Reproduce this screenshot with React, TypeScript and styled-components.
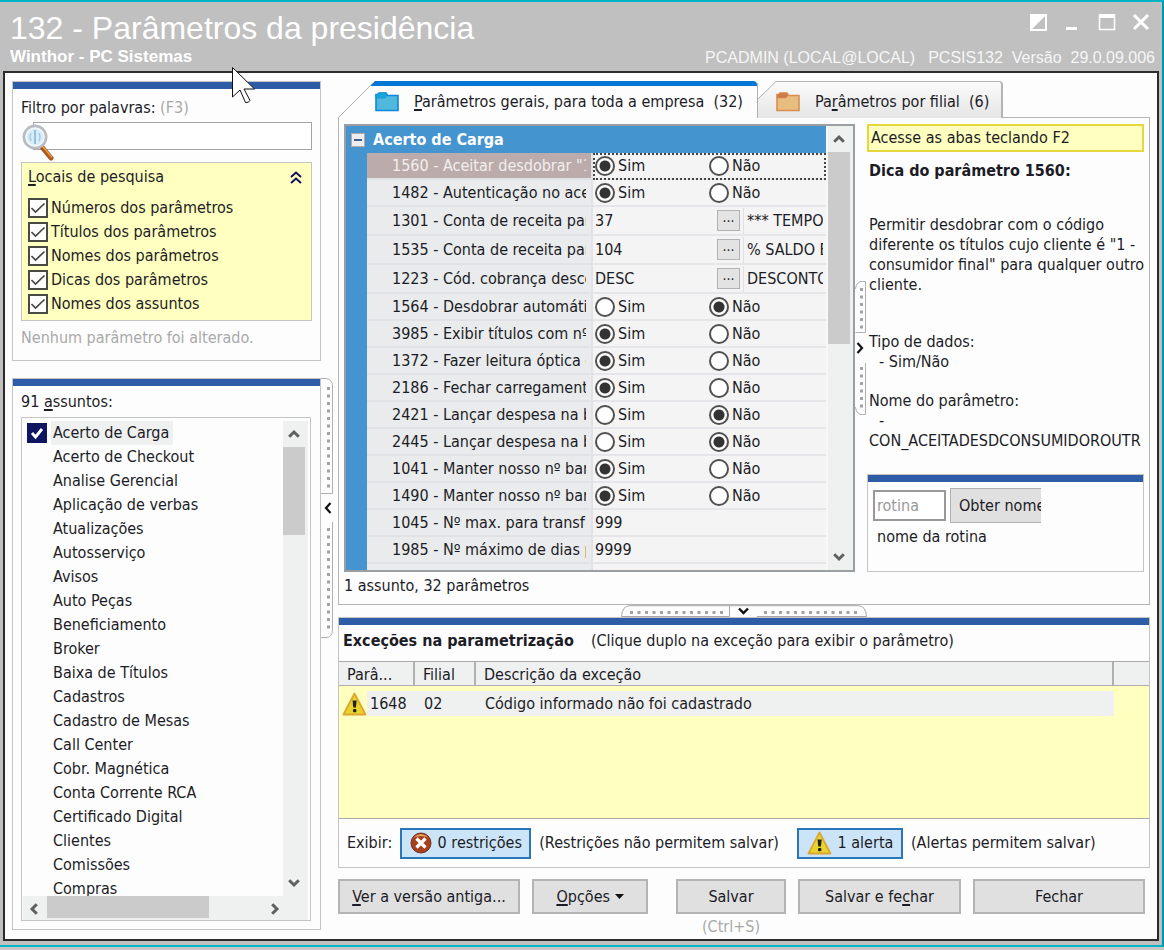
import React from 'react';
import styled, { createGlobalStyle, css } from 'styled-components';

const GlobalStyle = createGlobalStyle`
  * { box-sizing: border-box; }
  html, body, #root { height: 100%; }
  body {
    margin: 0;
    background: #c6c6c6;
    color: #1c1c26;
    font: 16px/20px "DejaVu Sans Condensed", "Noto Sans", sans-serif;
  }
  button, input { font: inherit; color: inherit; }
  button { padding: 0; }
  u { text-underline-offset: 2px; text-decoration-thickness: 2px; }
`;

const blueBar = '#2f5ca6';
const line = '#c4c4c4';
const pale = '#ffffbf';

/* ---------- window ---------- */

const Shell = styled.div`
  height: 100%;
  min-height: 760px;
  display: flex;
  flex-direction: column;
  padding-bottom: 3px;
`;

const Frame = styled.div`
  flex: 1;
  min-height: 0;
  display: flex;
  flex-direction: column;
  background: #c0c0c0;
  padding: 0 3px 4px;
  border: solid #00b4c8;
  border-width: 2px 0 2px 0;
  border-right: 2px solid #0096ac;
`;

const TitleBar = styled.header`
  position: relative;
  height: 69px;
  flex: none;
  display: flex;
  justify-content: space-between;
  padding: 8px 4px 0 7px;
  color: #fff;
  font-family: "Liberation Sans", Arial, sans-serif;
`;

const Titles = styled.div`
  display: flex;
  flex-direction: column;
`;

const Title = styled.h1`
  margin: 0;
  font-size: 32px;
  line-height: 36px;
  font-weight: 400;
  white-space: nowrap;
`;

const Subtitle = styled.div`
  font-weight: 700;
  font-size: 17px;
  line-height: 22px;
`;

const TitleSide = styled.div`
  display: flex;
  flex-direction: column;
  justify-content: space-between;
  align-items: flex-end;
  padding-bottom: 2px;
`;

const Session = styled.div`
  display: flex;
  gap: 13px;
  font-size: 16px;
  line-height: 22px;
  white-space: nowrap;
  color: #f6f6f6;
`;

const WindowButtons = styled.div`
  display: flex;
  gap: 14px;
  padding: 2px 4px 0 0;
`;

const WindowButton = styled.button`
  width: 20px;
  height: 20px;
  border: 0;
  background: none;
  svg { display: block; }
`;

const Pointer = styled.svg`
  position: absolute;
  left: 228px;
  top: 64px;
  z-index: 5;
`;

const Client = styled.main`
  flex: 1;
  min-height: 0;
  display: flex;
  gap: 5px;
  background: #fdfdfd;
  border: 2px solid #2b2b2b;
  padding: 8px 7px 0 7px;
`;

/* ---------- shared parts ---------- */

const Panel = styled.section`
  display: flex;
  flex-direction: column;
  border: 1px solid ${line};
  background: #fdfdfd;
  &::before {
    content: "";
    flex: none;
    height: 7px;
    background: ${blueBar};
  }
`;

const Muted = styled.span`
  color: #a9a9a9;
`;

const Button = styled.button<{ $w: number }>`
  width: ${(p) => p.$w}px;
  height: 35px;
  background: #e0e0e0;
  border: 2px solid #b4b4b4;
  white-space: nowrap;
`;

const ScrollTrack = styled.div<{ $horizontal?: boolean }>`
  flex: none;
  display: flex;
  flex-direction: ${(p) => (p.$horizontal ? 'row' : 'column')};
  justify-content: space-between;
  background: #eff0f0;
  ${(p) => (p.$horizontal ? 'height: 24px;' : 'width: 25px;')}
`;

const ScrollArrow = styled.button`
  display: flex;
  align-items: center;
  justify-content: center;
  width: 22px;
  height: 26px;
  border: 0;
  background: none;
`;

const ScrollThumb = styled.div<{ $horizontal?: boolean; $size: number }>`
  background: #cbcbcb;
  ${(p) =>
    p.$horizontal
      ? css`width: ${p.$size}px; height: 22px; margin: 0 auto 0 2px;`
      : css`height: ${p.$size}px; width: 22px; margin-bottom: auto;`}
`;

const Chevron = ({ turn }: { turn: number }) => (
  <svg width="12" height="12" viewBox="0 0 12 12" style={{ transform: `rotate(${turn}deg)` }}>
    <path d="M1.200 8.800 6 4l4.800 4.800" fill="none" stroke="#606060" strokeWidth="3" />
  </svg>
);

/* ---------- splitters ---------- */

const VerticalSplitter = styled.button<{ $self: string }>`
  flex: none;
  align-self: ${(p) => p.$self};
  width: 12px;
  border: 0;
  background: none;
  svg { display: block; }
`;

const HorizontalSplitter = styled.button`
  flex: none;
  align-self: center;
  height: 12px;
  border: 0;
  background: none;
  svg { display: block; }
`;

type GripProps = { arm: number; gap: number; side: 'left' | 'right' };

const Grip = ({ arm, gap, side }: GripProps) => {
  const total = arm * 2 + gap;
  const mid = total / 2;
  const left = side === 'left';
  return (
    <svg width="12" height={total} viewBox={`0 0 12 ${total}`}>
      <g transform={left ? undefined : 'translate(12 0) scale(-1 1)'} fill="none" stroke="#b0b0b0">
        {left ? (
          <path d={`M0 .5H5Q11.500 1.500 11.500 8V${arm - 0.5}H0M11.500 ${arm + gap}V${total - 8}Q11 ${total - 0.5} 5 ${total - 0.5}H0`} />
        ) : (
          <path d={`M1.500 ${arm - 0.5}V.5H6Q11 1.500 11.500 8M1.500 ${arm - 0.5}H11.500M1.500 ${arm + gap}V${total - 0.5}H6Q11 ${total - 1.5} 11.500 ${total - 8}`} />
        )}
        <path
          d={left ? `M7.500 9V${arm - 4}M7.500 ${arm + gap + 6}V${total - 7}` : `M5.500 7V${arm - 3}M5.500 ${arm + gap + 4}V${total - 6}`}
          stroke="#a2a2a2"
          strokeWidth="3"
          strokeDasharray="3 4.500"
        />
      </g>
      <path
        d={left ? `M9.500 ${mid - 5}L5 ${mid}l4.500 5` : `M2.500 ${mid - 5}L7 ${mid}l-4.500 5`}
        fill="none"
        stroke="#111"
        strokeWidth="2.200"
      />
    </svg>
  );
};

const HorizontalGrip = () => (
  <svg width="246" height="12" viewBox="0 0 246 12" fill="none">
    <path d="M.5 11.500Q1 1 9 .7H237Q245 1 245.500 11.500H136M.5 11.500H108.500V1" stroke="#a8a8a8" />
    <path d="M9 7.500H106M143 7.500H240" stroke="#a2a2a2" strokeWidth="3" strokeDasharray="3 4.500" />
    <path d="M118 3.500l4.500 4.500 4.500-4.500" stroke="#111" strokeWidth="2.400" />
  </svg>
);

/* ---------- left column ---------- */

const Sidebar = styled.aside`
  flex: none;
  width: 321px;
  display: flex;
  flex-direction: column;
  gap: 17px;
  padding-bottom: 9px;
`;

const FilterPanel = styled(Panel)`
  height: 280px;
  flex: none;
  margin-right: 12px;
`;

const FilterBody = styled.div`
  display: flex;
  flex-direction: column;
  padding: 9px 8px 0;
`;

const FieldLabel = styled.label`
  line-height: 20px;
`;

const SearchBox = styled.div`
  position: relative;
  margin: 4px 0 12px 12px;
  svg { position: absolute; left: -12px; top: 1px; }
`;

const SearchInput = styled.input`
  display: block;
  width: 100%;
  height: 28px;
  padding: 0 8px 0 24px;
  border: 1px solid #a4a4a4;
  background: #fff;
  outline: none;
`;

const Places = styled.fieldset`
  margin: 0 0 7px;
  padding: 4px 6px;
  border: 1px solid ${line};
  background: ${pale};
  min-width: 0;
`;

const PlacesHead = styled.div`
  display: flex;
  justify-content: space-between;
  align-items: center;
  height: 20px;
  margin-bottom: 9px;
  svg { margin-right: 3px; }
`;

const CheckRow = styled.label`
  display: flex;
  align-items: center;
  gap: 3px;
  height: 24px;
`;

const CheckBox = styled.input`
  appearance: none;
  flex: none;
  width: 20px;
  height: 20px;
  margin: 0;
  border: 2px solid #4a4a44;
  background: #fff
    url("data:image/svg+xml,%3Csvg xmlns='http://www.w3.org/2000/svg' viewBox='0 0 16 16'%3E%3Cpath d='M1.500 8l4 4L14.500 3.500' fill='none' stroke='%23444' stroke-width='1.700'/%3E%3C/svg%3E")
    center / 16px no-repeat;
`;

const SubjectArea = styled.div`
  flex: 1;
  min-height: 0;
  display: flex;
`;

const SubjectPanel = styled(Panel)`
  flex: 1;
  min-width: 0;
`;

const SubjectBody = styled.div`
  flex: 1;
  min-height: 0;
  display: flex;
  flex-direction: column;
  gap: 5px;
  padding: 6px 9px 8px 8px;
`;

const ListBox = styled.div`
  flex: 1;
  min-height: 0;
  display: flex;
  flex-direction: column;
  border: 1px solid ${line};
  padding: 3px 2px 0 1px;
  background: #fdfdfd;
`;

const ListMain = styled.div`
  flex: 1;
  min-height: 0;
  display: flex;
`;

const List = styled.ul`
  flex: 1;
  margin: 0;
  padding: 0 0 0 4px;
  list-style: none;
  overflow: hidden;
`;

const Item = styled.li`
  height: 24px;
  line-height: 24px;
  padding-left: 26px;
`;

const CheckedItem = styled.li`
  height: 24px;
  label {
    display: flex;
    align-items: center;
    gap: 4px;
  }
  span {
    height: 24px;
    line-height: 24px;
    padding: 0 4px 0 2px;
    background: #eff0f0;
  }
`;

const NavyCheck = styled(CheckBox)`
  border: 0;
  background: #0f1560
    url("data:image/svg+xml,%3Csvg xmlns='http://www.w3.org/2000/svg' viewBox='0 0 20 20'%3E%3Cpath d='M5 10l3.500 4L15 6' fill='none' stroke='white' stroke-width='2.800'/%3E%3C/svg%3E")
    center / 20px no-repeat;
`;

/* ---------- right column ---------- */

const Work = styled.div`
  flex: 1;
  min-width: 0;
  display: flex;
  flex-direction: column;
`;

const TabBar = styled.div`
  flex: none;
  display: flex;
  height: 37px;
  margin-bottom: -1px;
  position: relative;
`;

const Tab = styled.button<{ $active?: boolean }>`
  display: flex;
  align-items: stretch;
  height: ${(p) => (p.$active ? 38 : 37)}px;
  border: 0;
  background: none;
  white-space: nowrap;
  > svg { flex: none; display: block; }
`;

const TabFace = styled.span<{ $active?: boolean }>`
  display: flex;
  align-items: center;
  gap: 15px;
  ${(p) =>
    p.$active
      ? css`
          background: #fdfdfd;
          border-top: 5px solid #0077d6;
          border-radius: 0 4px 0 0;
          padding: 0 14px 1px 0;
        `
      : css`
          background: linear-gradient(#fbfbfb, #e5e5e5);
          border: solid #b4b4b4;
          border-width: 1px 2px 0 0;
          border-radius: 0 4px 0 0;
          padding: 4px 12px 0 0;
        `}
`;

const TabPage = styled.div`
  flex: 1;
  min-height: 0;
  display: flex;
  flex-direction: column;
  border: 1px solid #b4b4b4;
  padding: 6px 5px 0;
`;

const PageMain = styled.div`
  flex: 1;
  min-height: 0;
  display: flex;
`;

const Status = styled.div`
  height: 32px;
  line-height: 28px;
`;

const GridBox = styled.div`
  flex: 1;
  min-width: 0;
  display: flex;
  gap: 2px;
  border: 2px solid #9a9fa4;
  background: #f8f8f8;
`;

const GridView = styled.div`
  flex: 1;
  min-width: 0;
  overflow: hidden;
`;

const ParamTable = styled.table`
  width: 100%;
  table-layout: fixed;
  border-spacing: 0;
  td, th { padding: 0; font-weight: 400; text-align: left; }
`;

const GroupHead = styled.th`
  height: 27px;
  background: #4494cf;
  color: #fff;
`;

const GroupTitle = styled.div`
  display: flex;
  align-items: center;
  gap: 8px;
  padding-left: 5px;
  font-weight: 700;
`;

const Strip = styled.td`
  background: #4494cf;
`;

const Row = styled.tr<{ $tall?: boolean }>`
  height: ${(p) => (p.$tall ? 29 : 27)}px;
`;

const NameCell = styled.th<{ $selected?: boolean }>`
  border: solid #e2e1e6;
  border-width: 0 2px 2px 0;
  background: ${(p) => (p.$selected ? '#bbacab' : '#e9ebec')};
  color: ${(p) => (p.$selected ? '#f4eeee' : 'inherit')};
  div {
    margin: 0 5px 0 25px;
    overflow: hidden;
    white-space: nowrap;
  }
`;

const ValueCell = styled.td<{ $selected?: boolean }>`
  border-bottom: 2px solid #e6e5ea;
  background: #f4f4f4;
  ${(p) =>
    p.$selected &&
    css`
      outline: 2px dotted #444;
      outline-offset: -2px;
    `}
`;

const Choices = styled.div`
  display: grid;
  grid-template-columns: 114px 1fr;
  padding-left: 2px;
`;

const Choice = styled.label`
  display: flex;
  align-items: center;
  gap: 3px;
`;

const Radio = styled.input`
  appearance: none;
  flex: none;
  width: 20px;
  height: 20px;
  margin: 0;
  border: 2px solid #505050;
  border-radius: 50%;
  background: #fff;
  &:checked {
    background: radial-gradient(circle, #333 0 5px, #fff 6px);
  }
`;

const Entry = styled.div`
  display: flex;
  height: 26px;
  align-items: center;
`;

const EntryValue = styled.div`
  width: 124px;
  padding-left: 2px;
`;

const EntryMore = styled.button`
  width: 23px;
  height: 21px;
  line-height: 10px;
  border: 1px solid #b2b2b2;
  background: #e3e3e3;
  font-size: 14px;
  display: flex;
  align-items: center;
  justify-content: center;
`;

const EntryNote = styled.div`
  flex: 1;
  min-width: 0;
  height: 26px;
  line-height: 26px;
  margin: 0 3px;
  padding-left: 3px;
  border-left: 1px solid #e0dfe4;
  overflow: hidden;
  white-space: nowrap;
`;

const Aside = styled.div`
  flex: none;
  width: 277px;
  display: flex;
  flex-direction: column;
`;

const Tip = styled.div`
  height: 28px;
  padding: 2px 2px;
  border: 2px solid #e6d83c;
  background: ${pale};
`;

const Hint = styled.div`
  flex: 1;
  min-height: 0;
  margin-right: -4px;
  padding: 9px 0 0 2px;
  overflow: hidden;
  h2 {
    margin: 0 0 34px;
    font-size: 16px;
    line-height: 20px;
  }
  p { margin: 0 0 37px; }
  dl { margin: 0; }
  dd { margin: 0 0 19px; text-indent: 10px; }
`;

const RoutineBody = styled.div`
  height: 89px;
  display: flex;
  flex-direction: column;
  gap: 4px;
  padding: 6px 5px;
`;

const RoutineRow = styled.div`
  display: flex;
  align-items: center;
  gap: 4px;
`;

const RoutineInput = styled.input`
  width: 73px;
  height: 31px;
  padding: 0 2px;
  border: 2px solid #999;
  background: #fff;
  &::placeholder { color: #999; opacity: 1; }
`;

const RoutineButton = styled.button`
  width: 91px;
  height: 35px;
  padding-left: 8px;
  text-align: left;
  white-space: nowrap;
  overflow: hidden;
  background: #e0e0e0;
  border: solid #b0b0b0;
  border-width: 1px 0 1px 1px;
`;

const RoutineName = styled.div`
  padding-left: 4px;
`;

/* ---------- exceptions ---------- */

const Exceptions = styled(Panel)`
  flex: none;
  height: 251px;
`;

const ExceptionsHead = styled.div`
  display: flex;
  gap: 17px;
  height: 36px;
  line-height: 32px;
  padding-left: 4px;
  white-space: nowrap;
`;

const ExceptionsList = styled.div`
  flex: 1;
  background: ${pale};
  border: solid #aaa;
  border-width: 1px 0;
`;

const ExceptionsTable = styled.table`
  width: 100%;
  table-layout: fixed;
  border-spacing: 0;
  white-space: nowrap;
  th {
    height: 24px;
    padding: 2px 8px 0;
    overflow: hidden;
    font-weight: 400;
    text-align: left;
    background: #eff0f0;
    border: solid #b0b0b0;
    border-width: 0 2px 1px 0;
  }
  th:last-child { border-right: 0; }
  td {
    padding: 0 9px;
    height: 25px;
    background: #eff0f0;
  }
  td:first-child {
    padding: 0;
    background: linear-gradient(90deg, ${pale} 28px, #eff0f0 28px);
  }
  td:last-child { background: ${pale}; }
`;

const Spacer = styled.tbody`
  tr { height: 5px; }
  td, td:first-child, td:last-child { height: 5px; padding: 0; background: ${pale}; }
`;

const CodeCell = styled.div`
  display: flex;
  align-items: center;
  gap: 3px;
  padding-left: 3px;
`;

const ShowRow = styled.div`
  flex: none;
  height: 48px;
  display: flex;
  align-items: center;
  gap: 8px;
  padding-left: 8px;
  white-space: nowrap;
`;

const Toggle = styled.button<{ $w: number; $before?: number }>`
  display: flex;
  align-items: center;
  justify-content: center;
  gap: 6px;
  width: ${(p) => p.$w}px;
  height: 31px;
  margin-left: ${(p) => p.$before ?? 0}px;
  border: 2px solid #2a76b8;
  background: #cce4f7;
`;

const Actions = styled.footer`
  flex: none;
  display: flex;
  gap: 12px;
  height: 71px;
  padding-top: 11px;
  padding-right: 5px;
`;

const SaveGroup = styled.div`
  display: flex;
  flex-direction: column;
  align-items: center;
  gap: 3px;
  margin-left: auto;
`;

/* ---------- icons ---------- */

const Folder = ({ fill, stroke, tab }: { fill: string; stroke: string; tab: string }) => (
  <svg width="24" height="20" viewBox="0 0 24 20">
    <path d="M1 2.500h1.500L4 1h7l1.500 2.500H23v15H1z" fill={fill} stroke={stroke} strokeWidth="1.600" />
    <path d="M1 2.500h1.500L4 1h7l1 2.500-2 2.500H1z" fill={tab} stroke={stroke} strokeWidth=".6" />
  </svg>
);

const Warning = () => (
  <svg width="25" height="24" viewBox="0 0 25 24">
    <path d="M12.500 1.500 23.500 22.500H1.500z" fill="#ead42c" stroke="#dba733" strokeWidth="1.800" strokeLinejoin="round" />
    <path d="M10.500 8.500h4.200l-.8 7h-2.600z" fill="#222" />
    <rect x="11" y="17" width="3.400" height="3.200" rx="1" fill="#222" />
  </svg>
);

const Forbidden = () => (
  <svg width="22" height="22" viewBox="0 0 22 22">
    <circle cx="11" cy="11" r="10" fill="#a8401f" stroke="#6e3020" />
    <path d="M3.500 5.500Q11-1.500 18.500 5.500 11 2.500 3.500 5.500z" fill="#eba659" />
    <path d="M6.500 6.500l9 9m0-9l-9 9" stroke="#fff" strokeWidth="3.200" />
  </svg>
);

const Magnifier = () => (
  <svg width="34" height="38" viewBox="0 0 34 38">
    <path d="M20 23l10 12" stroke="#a85a20" strokeWidth="5" strokeLinecap="round" />
    <path d="M20.500 22l10 12" stroke="#e29a4a" strokeWidth="1.500" strokeLinecap="round" />
    <circle cx="14" cy="14" r="11" fill="#cfe6f2" stroke="#b9bcc0" strokeWidth="3" />
    <circle cx="14" cy="14" r="9" fill="#d8edf7" stroke="#f4f8fa" strokeWidth="1.500" />
    <path d="M14 7v14" stroke="#7db2d6" strokeWidth="1.500" />
    <path d="M10 10q-2 4 0 8M18 10q2 4 0 8" stroke="#a5cde4" strokeWidth="1.500" fill="none" />
  </svg>
);

/* ---------- data ---------- */

const places = ['Números dos parâmetros', 'Títulos dos parâmetros', 'Nomes dos parâmetros', 'Dicas dos parâmetros', 'Nomes dos assuntos'];

const subjects = [
  'Acerto de Checkout', 'Analise Gerencial', 'Aplicação de verbas', 'Atualizações', 'Autosserviço', 'Avisos', 'Auto Peças',
  'Beneficiamento', 'Broker', 'Baixa de Títulos', 'Cadastros', 'Cadastro de Mesas', 'Call Center', 'Cobr. Magnética',
  'Conta Corrente RCA', 'Certificado Digital', 'Clientes', 'Comissões', 'Compras',
];

type Param = { code: string; name: string; yes?: boolean; value?: string; note?: string };

const params: Param[] = [
  { code: '1560', name: 'Aceitar desdobrar "1', yes: true },
  { code: '1482', name: 'Autenticação no ace', yes: true },
  { code: '1301', name: 'Conta de receita par', value: '37', note: '*** TEMPO' },
  { code: '1535', name: 'Conta de receita par', value: '104', note: '% SALDO B' },
  { code: '1223', name: 'Cód. cobrança desco', value: 'DESC', note: 'DESCONTO' },
  { code: '1564', name: 'Desdobrar automátic', yes: false },
  { code: '3985', name: 'Exibir títulos com nº', yes: true },
  { code: '1372', name: 'Fazer leitura óptica d', yes: true },
  { code: '2186', name: 'Fechar carregament', yes: true },
  { code: '2421', name: 'Lançar despesa na b', yes: false },
  { code: '2445', name: 'Lançar despesa na b', yes: false },
  { code: '1041', name: 'Manter nosso nº ban', yes: true },
  { code: '1490', name: 'Manter nosso nº ban', yes: true },
  { code: '1045', name: 'Nº max. para transf', value: '999' },
  { code: '1985', name: 'Nº máximo de dias p', value: '9999' },
];

const ParamRow = ({ param, first }: { param: Param; first: boolean }) => (
  <Row $tall={param.note !== undefined}>
    {first && <Strip rowSpan={params.length + 1} />}
    <NameCell scope="row" $selected={first}>
      <div>{param.code} - {param.name}</div>
    </NameCell>
    <ValueCell $selected={first}>
      {param.value === undefined ? (
        <Choices>
          <Choice><Radio type="radio" name={`p${param.code}`} defaultChecked={param.yes} />Sim</Choice>
          <Choice><Radio type="radio" name={`p${param.code}`} defaultChecked={!param.yes} />Não</Choice>
        </Choices>
      ) : param.note ? (
        <Entry>
          <EntryValue>{param.value}</EntryValue>
          <EntryMore aria-label="Pesquisar">···</EntryMore>
          <EntryNote>{param.note}</EntryNote>
        </Entry>
      ) : (
        <EntryValue>{param.value}</EntryValue>
      )}
    </ValueCell>
  </Row>
);

export default function App() {
  return (
    <Shell>
      <GlobalStyle />
      <Frame>
        <TitleBar>
          <Titles>
            <Title>132 - Parâmetros da presidência</Title>
            <Subtitle>Winthor - PC Sistemas</Subtitle>
          </Titles>
          <TitleSide>
            <WindowButtons>
              <WindowButton aria-label="Recolher">
                <svg width="20" height="20"><rect x="2" y="3" width="15" height="15" fill="none" stroke="#fff" strokeWidth="2" /><path d="M2 3h15L2 18z" fill="#fff" /></svg>
              </WindowButton>
              <WindowButton aria-label="Minimizar">
                <svg width="20" height="20"><rect x="3" y="15" width="11" height="3" fill="#fff" /></svg>
              </WindowButton>
              <WindowButton aria-label="Maximizar">
                <svg width="20" height="20"><rect x="2.500" y="3" width="15" height="14.500" fill="none" stroke="#fff" strokeWidth="1.500" /><rect x="2" y="2" width="16" height="4" fill="#fff" /></svg>
              </WindowButton>
              <WindowButton aria-label="Fechar janela">
                <svg width="20" height="20"><path d="M3 3l14 14M17 3L3 17" stroke="#fff" strokeWidth="3" /></svg>
              </WindowButton>
            </WindowButtons>
            <Session>
              <span>PCADMIN (LOCAL@LOCAL)</span>
              <span>PCSIS132&nbsp; Versão&nbsp; 29.0.09.006</span>
            </Session>
          </TitleSide>
          <Pointer width="25" height="40" viewBox="0 0 25 40">
            <path d="M1.500 1.500V31L9 24l5.500 12.500q3 .5 4.500-2L13 23h10.500z" fill="#fff" stroke="#111" />
          </Pointer>
        </TitleBar>

        <Client>
          <Sidebar>
            <FilterPanel>
              <FilterBody>
                <FieldLabel htmlFor="filter">Filtro por palavras: <Muted>(F3)</Muted></FieldLabel>
                <SearchBox>
                  <SearchInput id="filter" />
                  <Magnifier />
                </SearchBox>
                <Places>
                  <PlacesHead>
                    <span><u>L</u>ocais de pesquisa</span>
                    <svg width="12" height="13" viewBox="0 0 12 13"><path d="M1 6l5-4.500L11 6M1 12l5-4.500L11 12" fill="none" stroke="#12125e" strokeWidth="2" /></svg>
                  </PlacesHead>
                  {places.map((p) => (
                    <CheckRow key={p}><CheckBox type="checkbox" defaultChecked />{p}</CheckRow>
                  ))}
                </Places>
                <Muted>Nenhum parâmetro foi alterado.</Muted>
              </FilterBody>
            </FilterPanel>
            <SubjectArea>
              <SubjectPanel>
                <SubjectBody>
                  <div>91 <u>a</u>ssuntos:</div>
                  <ListBox>
                    <ListMain>
                      <List>
                        <CheckedItem>
                          <label><NavyCheck type="checkbox" defaultChecked /><span>Acerto de Carga</span></label>
                        </CheckedItem>
                        {subjects.map((s) => <Item key={s}>{s}</Item>)}
                      </List>
                      <ScrollTrack>
                        <ScrollArrow aria-label="Subir lista"><Chevron turn={0} /></ScrollArrow>
                        <ScrollThumb $size={88} />
                        <ScrollArrow aria-label="Descer lista"><Chevron turn={180} /></ScrollArrow>
                      </ScrollTrack>
                    </ListMain>
                    <ScrollTrack $horizontal>
                      <ScrollArrow aria-label="Lista à esquerda"><Chevron turn={-90} /></ScrollArrow>
                      <ScrollThumb $horizontal $size={162} />
                      <ScrollArrow aria-label="Lista à direita"><Chevron turn={90} /></ScrollArrow>
                      <ScrollArrow as="span" />
                    </ScrollTrack>
                  </ListBox>
                </SubjectBody>
              </SubjectPanel>
              <VerticalSplitter $self="flex-start" aria-label="Recolher painel esquerdo"><Grip arm={116} gap={28} side="left" /></VerticalSplitter>
            </SubjectArea>
          </Sidebar>

          <Work>
            <TabBar>
              <Tab $active>
                <svg width="37" height="38" viewBox="0 0 37 38">
                  <path d="M.5 38V36.500L37 0V38z" fill="#fdfdfd" />
                  <path d="M32 5L37 0V5z" fill="#0077d6" />
                  <path d="M.5 38V36.500L37 0" fill="none" stroke="#b0b0b0" />
                </svg>
                <TabFace $active>
                  <Folder fill="#4fb8dc" stroke="#0f86dc" tab="#16a8d8" />
                  <span><u>P</u>arâmetros gerais, para toda a empresa&nbsp; (32)</span>
                </TabFace>
              </Tab>
              <Tab>
                <svg width="19" height="37" viewBox="0 0 19 37">
                  <defs><linearGradient id="tab" x2="0" y2="1"><stop stopColor="#fbfbfb" /><stop offset="1" stopColor="#e5e5e5" /></linearGradient></defs>
                  <path d="M0 37V18.500L19 0V37z" fill="url(#tab)" />
                  <path d="M.5 2V37M.5 18.500L19 .5" fill="none" stroke="#b0b0b0" />
                </svg>
                <TabFace>
                  <Folder fill="#e8bd80" stroke="#d98f52" tab="#d07848" />
                  <span>Pa<u>r</u>âmetros por filial&nbsp; (6)</span>
                </TabFace>
              </Tab>
            </TabBar>
            <TabPage>
              <PageMain>
                <GridBox>
                  <GridView>
                    <ParamTable>
                      <colgroup><col width="21" /><col width="226" /><col /></colgroup>
                      <tbody>
                        <tr>
                          <GroupHead colSpan={3}>
                            <GroupTitle>
                              <svg width="14" height="14"><rect x=".5" y=".5" width="13" height="13" fill="#eee" stroke="#b9a9a4" /><path d="M3 7h8" stroke="#40609a" strokeWidth="2" /></svg>
                              Acerto de Carga
                            </GroupTitle>
                          </GroupHead>
                        </tr>
                        {params.map((p, i) => <ParamRow key={p.code} param={p} first={i === 0} />)}
                        <Row><NameCell /><ValueCell /></Row>
                      </tbody>
                    </ParamTable>
                  </GridView>
                  <ScrollTrack>
                    <ScrollArrow aria-label="Subir"><Chevron turn={0} /></ScrollArrow>
                    <ScrollThumb $size={192} />
                    <ScrollArrow aria-label="Descer"><Chevron turn={180} /></ScrollArrow>
                  </ScrollTrack>
                </GridBox>
                <VerticalSplitter $self="center" aria-label="Recolher dicas"><Grip arm={52} gap={30} side="right" /></VerticalSplitter>
                <Aside>
                  <Tip>Acesse as abas teclando F2</Tip>
                  <Hint>
                    <h2>Dica do parâmetro 1560:</h2>
                    <p>Permitir desdobrar com o código diferente os títulos cujo cliente é "1 - consumidor final" para qualquer outro cliente.</p>
                    <dl>
                      <dt>Tipo de dados:</dt>
                      <dd>- Sim/Não</dd>
                      <dt>Nome do parâmetro:</dt>
                      <dd>- CON_ACEITADESDCONSUMIDOROUTR</dd>
                    </dl>
                  </Hint>
                  <Panel>
                    <RoutineBody>
                      <RoutineRow>
                        <RoutineInput placeholder="rotina" aria-label="rotina" />
                        <RoutineButton>Obter nome</RoutineButton>
                      </RoutineRow>
                      <RoutineName>nome da rotina</RoutineName>
                    </RoutineBody>
                  </Panel>
                </Aside>
              </PageMain>
              <Status>1 assunto, 32 parâmetros</Status>
            </TabPage>
            <HorizontalSplitter aria-label="Recolher exceções"><HorizontalGrip /></HorizontalSplitter>
            <Exceptions>
              <ExceptionsHead>
                <strong>Exceções na parametrização</strong>
                <span>(Clique duplo na exceção para exibir o parâmetro)</span>
              </ExceptionsHead>
              <ExceptionsList>
                <ExceptionsTable>
                  <colgroup><col width="76" /><col width="61" /><col /><col width="35" /></colgroup>
                  <thead>
                    <tr><th>Parâ...</th><th>Filial</th><th>Descrição da exceção</th><th /></tr>
                  </thead>
                  <Spacer><tr><td colSpan={4} /></tr></Spacer>
                  <tbody>
                    <tr>
                      <td><CodeCell><Warning />1648</CodeCell></td>
                      <td>02</td>
                      <td>Código informado não foi cadastrado</td>
                      <td />
                    </tr>
                  </tbody>
                </ExceptionsTable>
              </ExceptionsList>
              <ShowRow>
                <span>Exibir:</span>
                <Toggle $w={131}><Forbidden />0 restrições</Toggle>
                <span>(Restrições não permitem salvar)</span>
                <Toggle $w={106} $before={10}><Warning />1 alerta</Toggle>
                <span>(Alertas permitem salvar)</span>
              </ShowRow>
            </Exceptions>
            <Actions>
              <Button $w={182}><u>V</u>er a versão antiga...</Button>
              <Button $w={116}><u>O</u>pções <svg width="9" height="8"><path d="M0 0h9L4.500 5z" fill="#111" /></svg></Button>
              <SaveGroup>
                <Button $w={110}>Salvar</Button>
                <Muted>(Ctrl+S)</Muted>
              </SaveGroup>
              <Button $w={163}>Salvar e fe<u>c</u>har</Button>
              <Button $w={172}>Fechar</Button>
            </Actions>
          </Work>
        </Client>
      </Frame>
    </Shell>
  );
}
